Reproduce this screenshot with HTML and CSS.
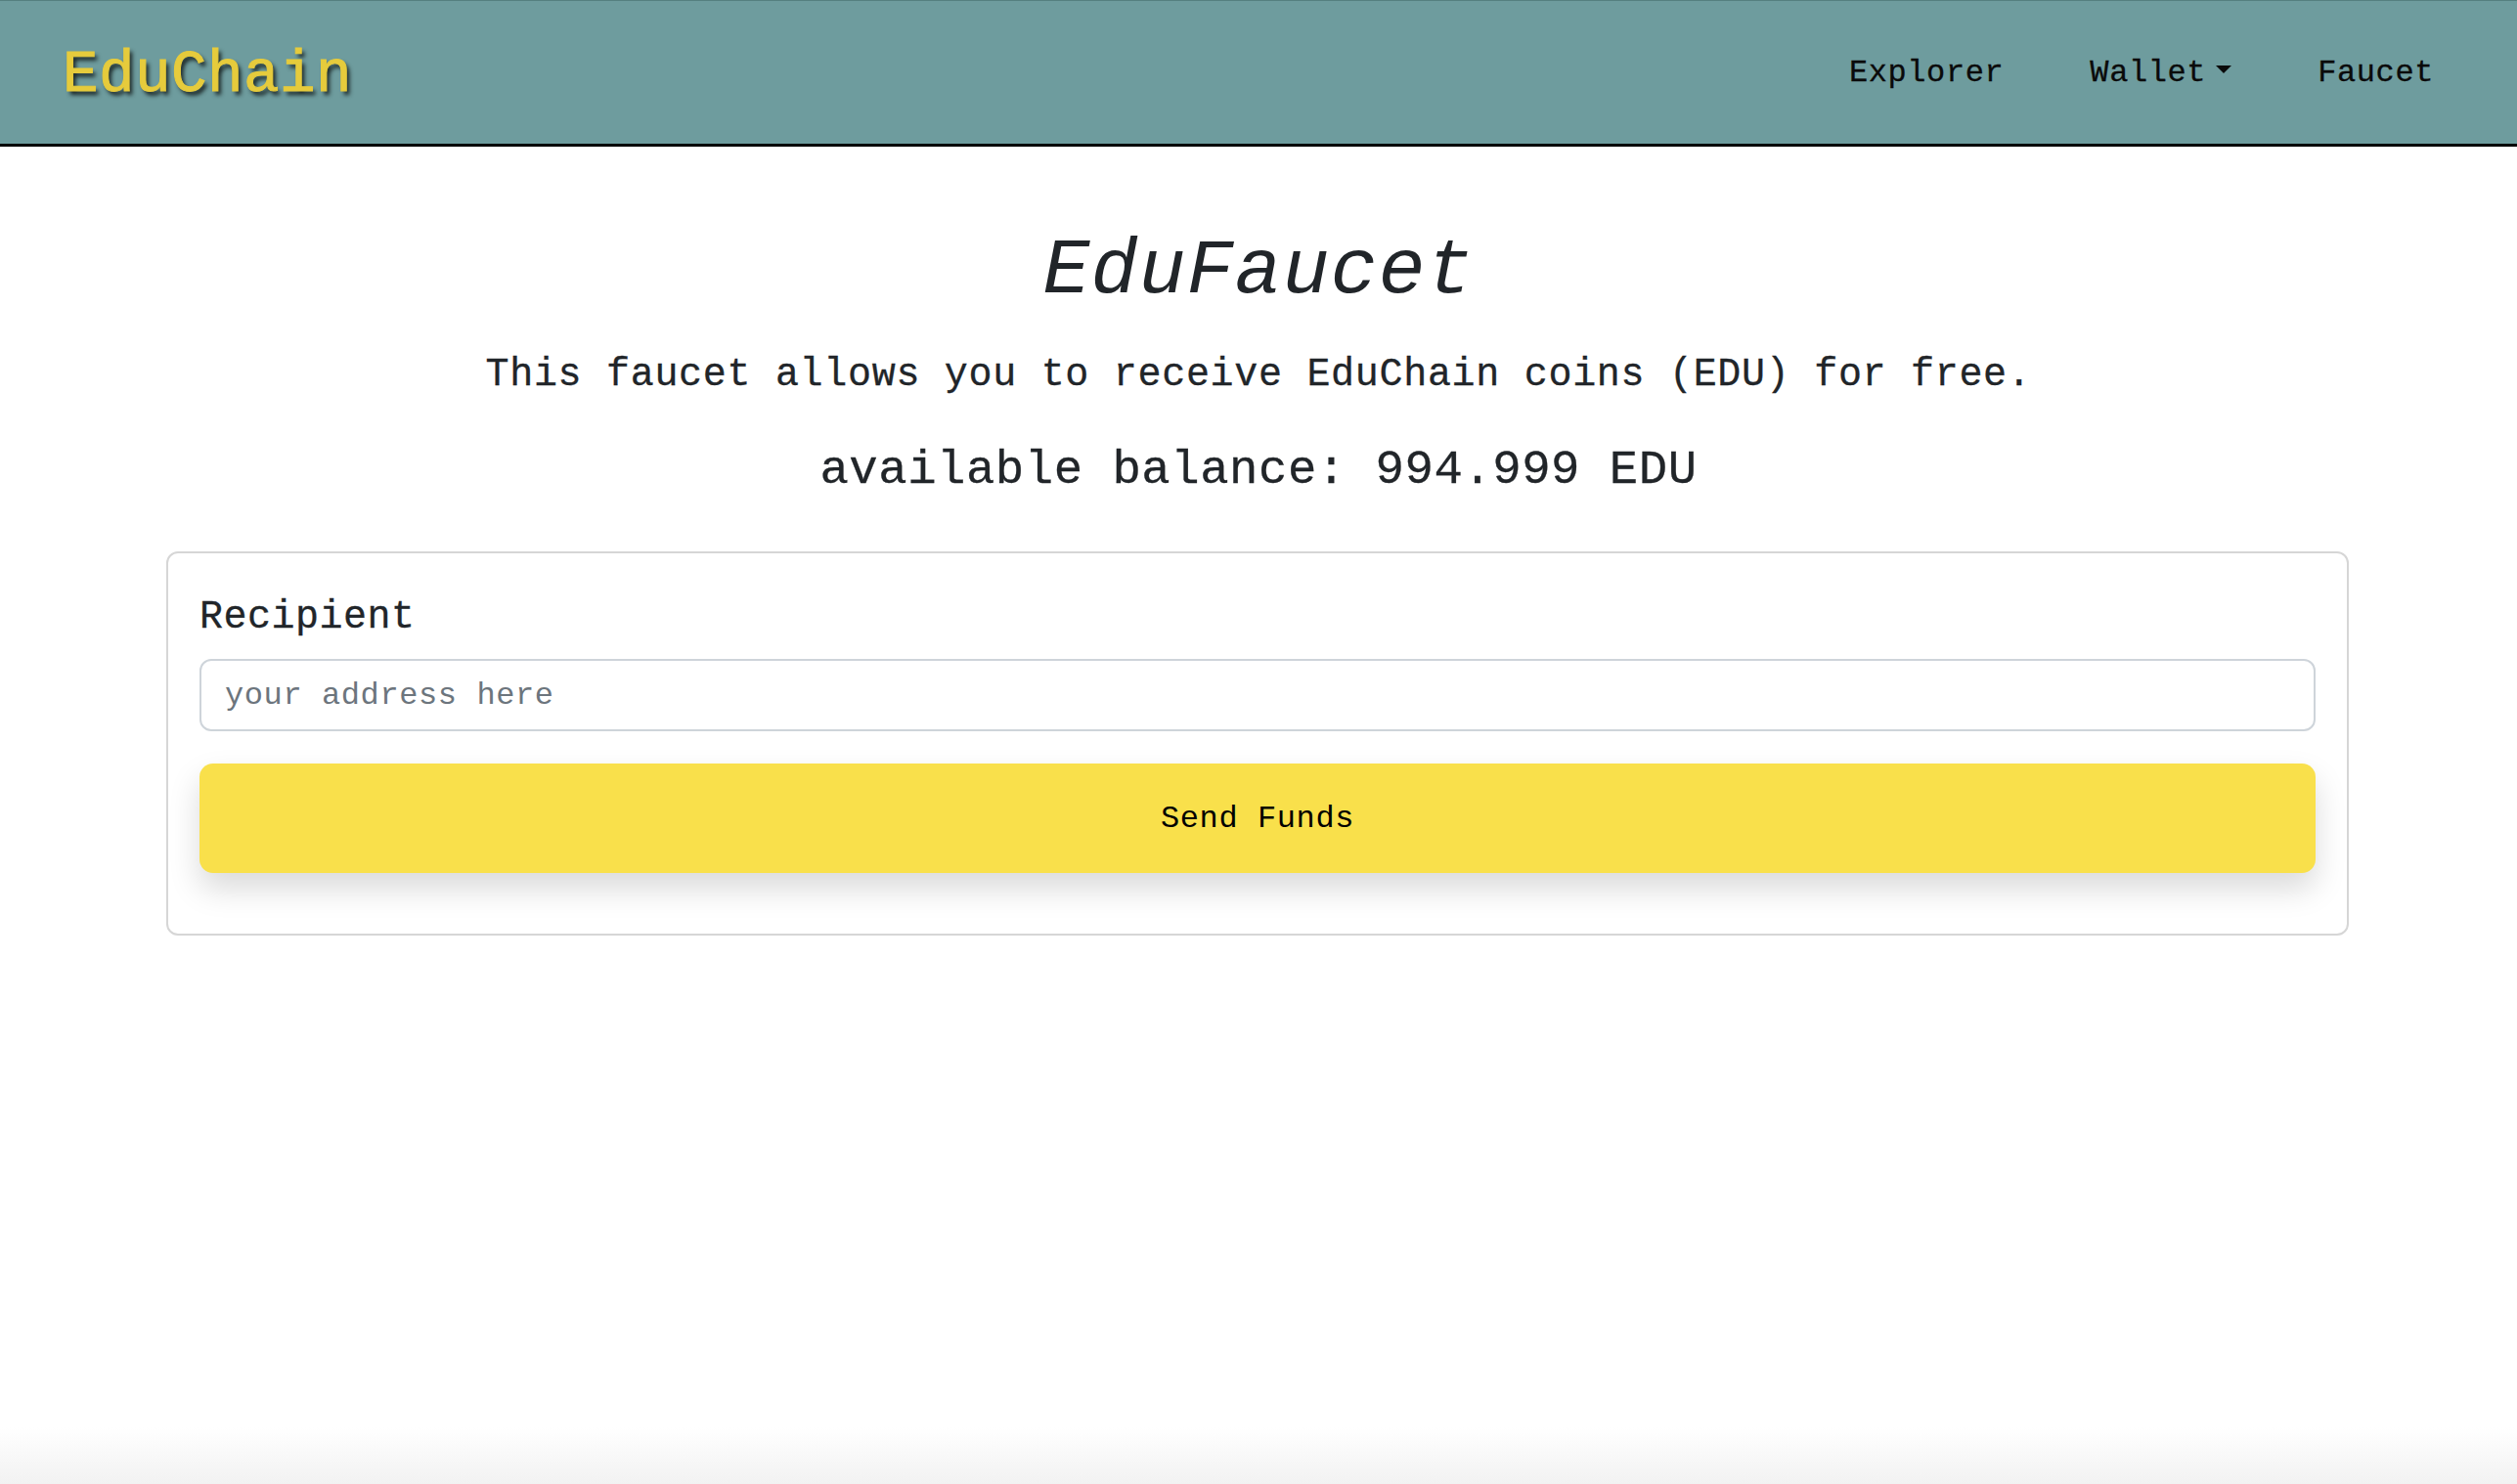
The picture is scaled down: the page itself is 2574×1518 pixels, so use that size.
FILE: index.html
```html
<!DOCTYPE html>
<html lang="en">
<head>
<meta charset="utf-8">
<title>EduFaucet</title>
<link rel="stylesheet" href="styles.css">
</head>
<body>
<div class="page">
  <header class="topbar">
    <a class="brand" href="#">EduChain</a>
    <nav class="nav">
      <a class="nav-link" href="#">Explorer</a>
      <a class="nav-link dropdown" href="#">Wallet<span class="caret"></span></a>
      <a class="nav-link" href="#">Faucet</a>
    </nav>
  </header>

  <main class="main">
    <h1 class="title">EduFaucet</h1>
    <p class="lead">This faucet allows you to receive EduChain coins (EDU) for free.</p>
    <p class="balance">available balance: 994.999 EDU</p>

    <section class="card">
      <div class="card-body">
        <label class="label" for="recipient">Recipient</label>
        <input class="input" id="recipient" type="text" placeholder="your address here">
        <button class="btn" type="button">Send Funds</button>
      </div>
    </section>
  </main>

  <div class="bottom-fade"></div>
</div>
</body>
</html>
```

FILE: styles.css
```css
* {
  box-sizing: border-box;
}

html, body {
  margin: 0;
  padding: 0;
}

body {
  font-family: "Liberation Mono", "DejaVu Sans Mono", monospace;
  color: #212529;
  background: #ffffff;
}

.page {
  min-height: 100vh;
  display: flex;
  flex-direction: column;
}

.topbar {
  height: 150px;
  background: #6e9c9e;
  border-top: 1px solid #55807f;
  border-bottom: 3px solid #000000;
  display: flex;
  align-items: center;
  justify-content: space-between;
  padding: 0 85px 0 64px;
}

.brand {
  font-size: 61px;
  padding-top: 4px;
  color: #e6cb3c;
  text-decoration: none;
  -webkit-text-stroke: 1px #e6cb3c;
  text-shadow: 3px 4px 4px #1a2424;
  letter-spacing: 0.4px;
}

.nav {
  display: flex;
  align-items: center;
  gap: 88px;
}

.nav-link {
  font-size: 32px;
  letter-spacing: 0.6px;
  color: #0a0a0a;
  text-decoration: none;
  display: flex;
  align-items: center;
  -webkit-text-stroke: 0.3px #0a0a0a;
}

.caret {
  display: inline-block;
  width: 0;
  height: 0;
  margin-left: 10px;
  margin-top: -6px;
  border-top: 8px solid #0a0a0a;
  border-left: 8px solid transparent;
  border-right: 8px solid transparent;
}

.main {
  display: flex;
  flex-direction: column;
  align-items: center;
}

.title {
  margin: 80px 0 0;
  font-size: 80px;
  line-height: 96px;
  font-style: italic;
  font-weight: normal;
  letter-spacing: 1px;
  color: #212529;
}

.lead {
  margin: 34px 0 0;
  font-size: 40px;
  line-height: 48px;
  letter-spacing: 0.7px;
  -webkit-text-stroke: 0.3px #212529;
}

.balance {
  margin: 44px 0 0;
  font-size: 49px;
  line-height: 59px;
  letter-spacing: 0.5px;
  -webkit-text-stroke: 0.3px #212529;
}

.card {
  width: 2232px;
  margin: 53px 2px 0 0;
  border: 2px solid #d6d6d6;
  border-radius: 12px;
  background: #ffffff;
}

.card-body {
  padding: 32px;
  display: flex;
  flex-direction: column;
}

.label {
  font-size: 40px;
  line-height: 60px;
  padding-top: 4px;
  letter-spacing: 0.5px;
  color: #212529;
  margin-bottom: 12px;
  -webkit-text-stroke: 0.3px #212529;
}

.input {
  height: 74px;
  border: 2px solid #ced4da;
  border-radius: 12px;
  padding: 0 24px;
  font-family: inherit;
  font-size: 32px;
  letter-spacing: 0.6px;
  color: #212529;
  background: #ffffff;
  outline: none;
}

.input::placeholder {
  color: #6c757d;
  opacity: 1;
}

.btn {
  margin-top: 33px;
  margin-bottom: 30px;
  height: 112px;
  border: none;
  border-radius: 14px;
  background: #f9e04b;
  box-shadow: 0 16px 32px rgba(0, 0, 0, 0.15);
  font-family: inherit;
  font-size: 32px;
  letter-spacing: 0.6px;
  color: #000000;
  cursor: pointer;
}

.bottom-fade {
  margin-top: auto;
  height: 58px;
  background: linear-gradient(to bottom, rgba(245, 245, 245, 0), #f2f2f2);
}
```
